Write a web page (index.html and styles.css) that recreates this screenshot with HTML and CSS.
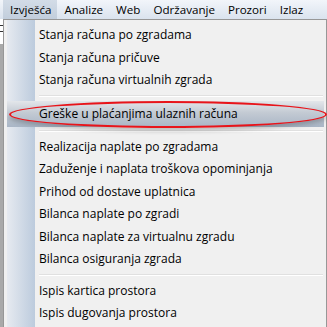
FILE: index.html
```html
<!DOCTYPE html>
<html lang="hr">
<head>
    <meta charset="UTF-8">
    <title>Izvješća</title>
    <link rel="stylesheet" href="styles.css">
</head>
<body>
    <div class="menubar">
        <span class="menubar-item active">Izvješća</span>
        <span class="menubar-item">Analize</span>
        <span class="menubar-item">Web</span>
        <span class="menubar-item">Održavanje</span>
        <span class="menubar-item">Prozori</span>
        <span class="menubar-item">Izlaz</span>
    </div>
    <div class="page">
        <div class="side"><div class="side-icon"></div></div>
        <div class="dropdown">
            <div class="item">Stanja računa po zgradama</div>
            <div class="item">Stanja računa pričuve</div>
            <div class="item">Stanja računa virtualnih zgrada</div>
            <div class="separator"></div>
            <div class="item selected">Greške u plaćanjima ulaznih računa<span class="ring"></span></div>
            <div class="separator"></div>
            <div class="item">Realizacija naplate po zgradama</div>
            <div class="item">Zaduženje i naplata troškova opominjanja</div>
            <div class="item">Prihod od dostave uplatnica</div>
            <div class="item">Bilanca naplate po zgradi</div>
            <div class="item">Bilanca naplate za virtualnu zgradu</div>
            <div class="item">Bilanca osiguranja zgrada</div>
            <div class="separator"></div>
            <div class="item">Ispis kartica prostora</div>
            <div class="item">Ispis dugovanja prostora</div>
        </div>
    </div>
</body>
</html>
```

FILE: styles.css
```css
/* Menu bar */
body {
    margin: 0;
    height: 327px;
    overflow: hidden;
    display: flex;
    flex-direction: column;
    background: #a9a9a9;
    font-family: "Open Sans", "Noto Sans", sans-serif;
    font-size: 12px;
    color: #000;
}

.menubar {
    display: flex;
    flex: none;
    height: 19px;
    padding-left: 3px;
    font-size: 11.6px;
    background: linear-gradient(#f2f5fa, #dae3ee);
}

.menubar-item {
    padding: 0 6px 0 7px;
    line-height: 19px;
}

.menubar-item.active {
    background: linear-gradient(#d3dce7, #c2cedc);
}

/* Left strip and dropdown */
.page {
    display: flex;
    flex: 1;
    min-height: 0;
}

.side {
    width: 3px;
    background: linear-gradient(#fff 0, #fff 25px, #a9a9a9 25px);
    overflow: hidden;
}

.side-icon {
    width: 3px;
    height: 5px;
    margin-top: 6px;
    border-top: 1px solid #333;
    border-bottom: 1px solid #333;
}

.dropdown {
    flex: 1;
    max-width: 316px;
    border: 1px solid #979797;
    border-bottom: none;
    padding: 4px 3px 0 3px;
    background: linear-gradient(to right, #e6eaf0, #bccbdd) 3px 0 / 28px 100% no-repeat, #f0f0f0;
}

.item {
    position: relative;
    height: 22.5px;
    line-height: 22px;
    padding-left: 32px;
    white-space: nowrap;
}

.item.selected {
    height: 26px;
    line-height: 26px;
    background: linear-gradient(#e3e6ea, #c3cad3 45%, #a9b6c6);
    margin-right: -1px;
}

/* Red highlight drawn over the selected entry */
.ring {
    position: absolute;
    left: 2px;
    right: -3px;
    top: 0;
    bottom: -1px;
    border: 2px solid #e8141a;
    border-radius: 50%;
    box-shadow: 0 3px 4px rgba(0, 0, 0, 0.22);
}

.separator {
    height: 1px;
    margin: 3px 0 4px 32px;
    border-top: 1px solid #e0e0e0;
    background: #fff;
}
```
